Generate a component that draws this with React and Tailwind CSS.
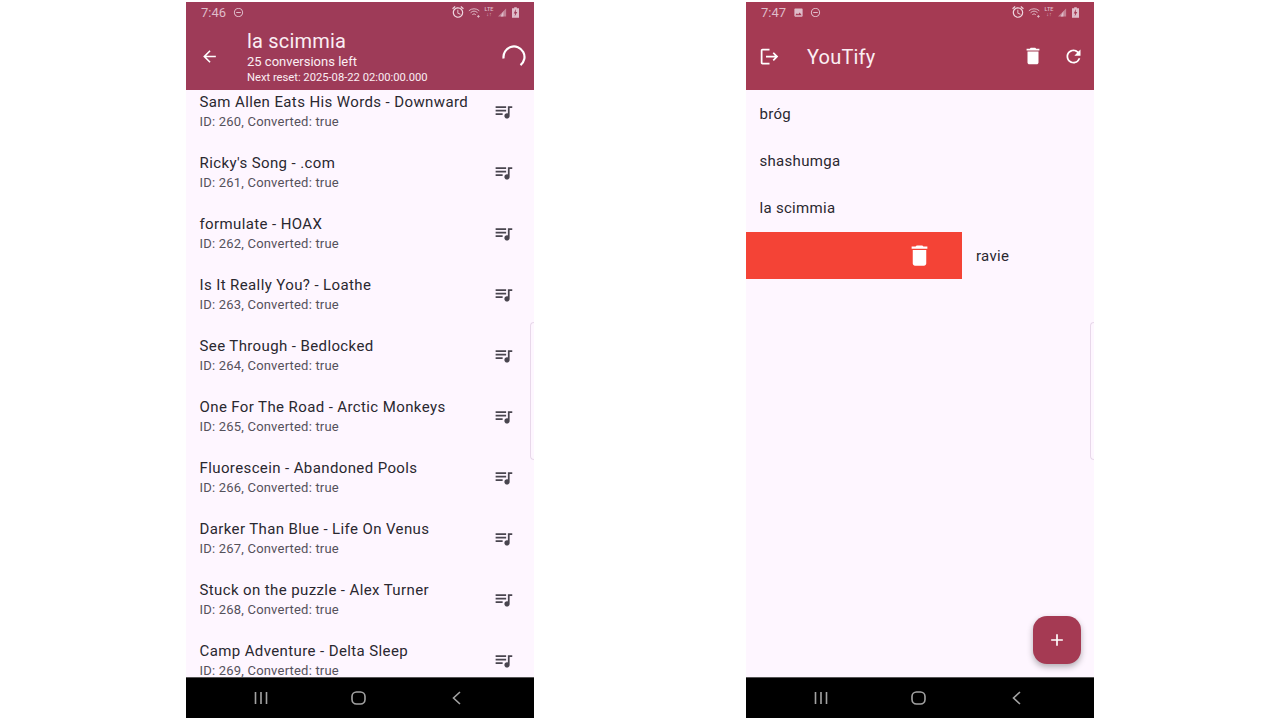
import React from 'react';
import { MdArrowBack, MdQueueMusic, MdDelete, MdRefresh, MdLogout, MdAdd, MdOutlineDoNotDisturbOn, MdImage, MdAlarm } from 'react-icons/md';

const tracks = [
  ['Sam Allen Eats His Words - Downward', 260],
  ["Ricky's Song - .com", 261],
  ['formulate - HOAX', 262],
  ['Is It Really You? - Loathe', 263],
  ['See Through - Bedlocked', 264],
  ['One For The Road - Arctic Monkeys', 265],
  ['Fluorescein - Abandoned Pools', 266],
  ['Darker Than Blue - Life On Venus', 267],
  ['Stuck on the puzzle - Alex Turner', 268],
  ['Camp Adventure - Delta Sleep', 269],
];

const playlists = ['bróg', 'shashumga', 'la scimmia'];

function StatusBar({ time, photo, bg }) {
  return (
    <div className="h-[20px] flex items-center pl-[15px] pr-[15px] text-[#dfbdca]">
      <span className="text-[13px] leading-none">{time}</span>
      {photo && <MdImage size={11} className="ml-[7px]" />}
      <MdOutlineDoNotDisturbOn size={11} className={photo ? 'ml-[6px]' : 'ml-[7px]'} />
      <div className="ml-auto flex items-center">
        <MdAlarm size={14} className="text-[#efd9e1]" />
        <svg width="13" height="11" viewBox="0 0 15 12" fill="none" stroke="currentColor" strokeWidth="1.1" className="ml-[3px]">
          <path d="M1 4a9 9 0 0 1 12 0M3 6.2a6 6 0 0 1 8 0M5 8.4a3 3 0 0 1 4 0" />
          <path d="M12 9v3M10.5 10.5h3" />
        </svg>
        <div className="ml-[3px] w-[10px] flex flex-col items-center text-[5.5px] leading-[5.5px] font-medium">
          <span>LTE</span>
          <span>↓↑</span>
        </div>
        <svg width="9" height="10" viewBox="0 0 10 10" className="ml-[4px]" fill="currentColor">
          <path d="M9 1v9H0z" opacity="0.55" />
          <path d="M6 4v6H3z" />
        </svg>
        <svg width="7" height="11" viewBox="0 0 8 12" className="ml-[5px]" fill="currentColor">
          <path d="M2.5 0h3v1H8v11H0V1h2.5z" />
          <path d="M4.5 2 2 7h1.6L3 10.5 6 5.5H4.3z" fill={bg} />
        </svg>
      </div>
    </div>
  );
}

function NavBar() {
  return (
    <div className="h-[41px] bg-black border-t border-[#555] flex items-center text-[#a3a3a3] relative z-10 shrink-0">
      <div className="flex-1 flex justify-end pr-[18px]">
        <svg width="14" height="14" viewBox="0 0 14 14" stroke="currentColor" strokeWidth="1.6">
          <path d="M1.5 1v12M7 1v12M12.5 1v12" />
        </svg>
      </div>
      <div className="w-[150px] flex justify-center pr-[5px]">
        <svg width="15" height="14" viewBox="0 0 15 14" fill="none" stroke="currentColor" strokeWidth="1.6">
          <rect x="1" y="1" width="13" height="12" rx="4.5" />
        </svg>
      </div>
      <div className="flex-1 flex justify-start pl-[16px]">
        <svg width="9" height="14" viewBox="0 0 9 14" fill="none" stroke="currentColor" strokeWidth="1.6">
          <path d="M8 1 1.5 7 8 13" />
        </svg>
      </div>
    </div>
  );
}

function EdgeHandle() {
  return (
    <div className="absolute right-0 top-[320px] h-[138px] w-[4px] rounded-l-[6px] border border-r-0 border-[#e8d8ea]" />
  );
}

function TrackScreen() {
  return (
    <div className="relative w-[348px] h-[716px] flex flex-col bg-[#fef6ff]">
      <div className="bg-[#9e3b58] h-[88px] shrink-0 relative z-10">
        <StatusBar time="7:46" bg="#9e3b58" />
        <div className="h-[68px] flex items-center text-white">
          <div className="w-[61px] pl-[14px]">
            <MdArrowBack size={19} />
          </div>
          <div className="flex-1 flex flex-col text-[#fbeef3]">
            <span className="text-[20px] leading-[26px] tracking-[0.2px]">la scimmia</span>
            <span className="text-[13px] leading-[16px]">25 conversions left</span>
            <span className="text-[11.2px] leading-[14px] mt-[1px]">Next reset: 2025-08-22 02:00:00.000</span>
          </div>
          <svg width="24" height="24" viewBox="0 0 24 24" fill="none" stroke="currentColor" strokeWidth="2.2" className="mr-[8px] mt-[1px]">
            <path d="M1.6 13.5A10.5 10.5 0 1 1 18.5 20.2" />
          </svg>
        </div>
      </div>
      <div className="flex-1 overflow-hidden">
        <div className="mt-[-8.5px] flex flex-col">
          {tracks.map(([name, id]) => (
            <div key={id} className="h-[61px] shrink-0 flex items-center pl-[13.5px] pr-[20px]">
              <div className="flex-1 flex flex-col">
                <span className="text-[15px] leading-[21px] tracking-[0.39px] text-[#2a2830]">{name}</span>
                <span className="text-[13px] leading-[20px] mt-[-1px] tracking-[0.2px] text-[#55515b]">ID: {id}, Converted: true</span>
              </div>
              <MdQueueMusic size={21} className="text-[#49454f] mb-[1px]" />
            </div>
          ))}
        </div>
      </div>
      <NavBar />
      <EdgeHandle />
    </div>
  );
}

function PlaylistScreen() {
  return (
    <div className="relative w-[348px] h-[716px] flex flex-col bg-[#fef6ff]">
      <div className="bg-[#a53a53] h-[88px] shrink-0">
        <StatusBar time="7:47" photo bg="#a53a53" />
        <div className="h-[68px] flex items-center text-white">
          <div className="w-[61px] pl-[13px]">
            <MdLogout size={21} />
          </div>
          <span className="flex-1 text-[20px] tracking-[0.2px] text-[#fbeef3] mt-[1px]">YouTify</span>
          <MdDelete size={22} className="mr-[19px]" />
          <MdRefresh size={21} className="mr-[10px]" />
        </div>
      </div>
      <div className="flex-1 flex flex-col">
        {playlists.map((name) => (
          <div key={name} className="h-[47.3px] flex items-center pl-[13.5px] pt-[1px] text-[15px] tracking-[0.3px] text-[#2a2830]">
            {name}
          </div>
        ))}
        <div className="h-[47.3px] flex items-center">
          <div className="w-[216px] h-full bg-[#f44336] flex items-center justify-end pr-[29px] text-white">
            <MdDelete size={27} />
          </div>
          <span className="pl-[14px] pt-[1px] text-[15px] tracking-[0.3px] text-[#2a2830]">ravie</span>
        </div>
      </div>
      <NavBar />
      <EdgeHandle />
      <button className="absolute right-[13px] bottom-[54px] w-[48px] h-[48px] rounded-[14px] bg-[#a53a53] text-white flex items-center justify-center shadow-[0_3px_6px_rgba(0,0,0,0.3)]">
        <MdAdd size={20} />
      </button>
    </div>
  );
}

export default function App() {
  return (
    <div className="w-[1280px] h-[720px] bg-white overflow-hidden pt-[2px] pl-[186px] flex gap-[212px] font-['Roboto',sans-serif]">
      <TrackScreen />
      <PlaylistScreen />
    </div>
  );
}
